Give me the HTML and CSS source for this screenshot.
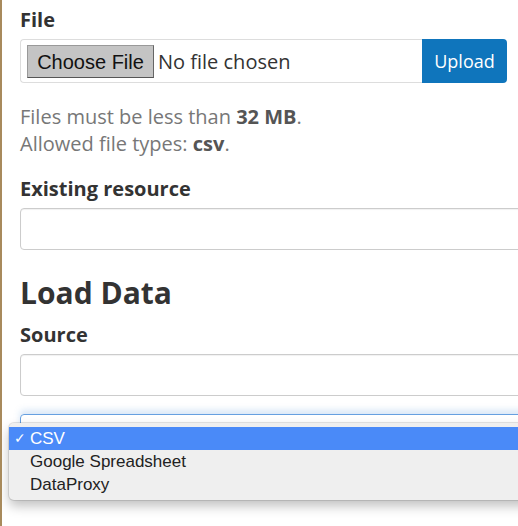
FILE: index.html
```html
<!DOCTYPE html>
<html>
<head>
<meta charset="utf-8">
<link rel="stylesheet" href="styles.css">
</head>
<body>
<div class="page">
  <form class="form">
    <div class="group">
      <label class="label">File</label>
      <div class="file-row">
        <div class="file-box">
          <span class="choose-btn">Choose File</span>
          <span class="no-file">No file chosen</span>
        </div>
        <button type="button" class="upload-btn">Upload</button>
      </div>
      <p class="help">Files must be less than <strong>32 MB</strong>.<br>Allowed file types: <strong>csv</strong>.</p>
    </div>
    <div class="group">
      <label class="label">Existing resource</label>
      <div class="input"></div>
    </div>
    <h2 class="heading">Load Data</h2>
    <div class="group">
      <label class="label">Source</label>
      <div class="input"></div>
    </div>
    <div class="select-wrap">
      <div class="input input-focus"></div>
      <ul class="popup">
        <li class="opt opt-selected"><span class="check">✓</span>CSV</li>
        <li class="opt">Google Spreadsheet</li>
        <li class="opt">DataProxy</li>
      </ul>
    </div>
  </form>
</div>
</body>
</html>
```
FILE: styles.css
```css
html, body {
  margin: 0;
  padding: 0;
  background: #fff;
  overflow: hidden;
}
.page {
  width: 518px;
  height: 526px;
  border-left: 2px solid #a88a5c;
  box-sizing: border-box;
  overflow: hidden;
  font-family: "Open Sans", sans-serif;
  color: #333;
}
.form {
  width: 560px;
  padding: 4px 0 0 18px;
}
.label {
  display: block;
  font-size: 20px;
  font-weight: 700;
  line-height: 30px;
  padding-top: 1px;
  margin: 0 0 4px 0;
  color: #333;
}
.file-row {
  display: flex;
  width: 487px;
  height: 44px;
}
.file-box {
  flex: 1;
  display: flex;
  align-items: center;
  border: 1px solid #ddd;
  border-right: none;
  border-radius: 4px 0 0 4px;
  padding-left: 6px;
}
.choose-btn {
  font-family: "Liberation Sans", Arial, sans-serif;
  font-size: 20px;
  color: #111;
  background: #c4c4c4;
  border: 1px solid #999;
  border-right-color: #666;
  border-bottom-color: #555;
  height: 33px;
  padding-top: 2px;
  box-sizing: border-box;
  width: 127px;
  display: flex;
  align-items: center;
  justify-content: center;
}
.no-file {
  font-size: 20px;
  margin-left: 4px;
  color: #333;
}
.upload-btn {
  width: 85px;
  border: none;
  background: #0f75bc;
  color: #fff;
  font-family: "Open Sans", sans-serif;
  font-size: 18px;
  border-radius: 0 4px 4px 0;
  padding: 0;
}
.help {
  margin: 20px 0 0 0;
  font-size: 20px;
  line-height: 27px;
  color: #777;
}
.help strong {
  color: #555;
}
.group + .group {
  margin-top: 16px;
}
.input {
  height: 42px;
  border: 1px solid #ccc;
  border-radius: 4px;
  box-sizing: border-box;
  width: 540px;
  box-shadow: inset 0 1px 1px rgba(0,0,0,0.06);
}
.heading {
  font-size: 30px;
  font-weight: 700;
  margin: 23px 0 6px 0;
  line-height: 40px;
  color: #333;
}
.select-wrap {
  position: relative;
  margin-top: 18px;
}
.input-focus {
  border-color: #66a0e0;
  box-shadow: 0 -4px 6px rgba(102,160,224,0.25);
}
.popup {
  position: absolute;
  left: -11px;
  top: 9px;
  width: 540px;
  margin: 0;
  padding: 4px 0 4px 0;
  list-style: none;
  background: #efefef;
  border-radius: 5px;
  box-shadow: 0 0 0 1px rgba(0,0,0,0.1), 0 6px 12px rgba(0,0,0,0.25);
  font-family: "Liberation Sans", Arial, sans-serif;
  font-size: 17px;
  color: #222;
}
.opt {
  height: 23px;
  line-height: 23px;
  padding-left: 21px;
  position: relative;
}
.opt-selected {
  background: #4a8af8;
  color: #fff;
}
.check {
  position: absolute;
  left: 5px;
  top: 0;
  font-size: 14px;
}
```
